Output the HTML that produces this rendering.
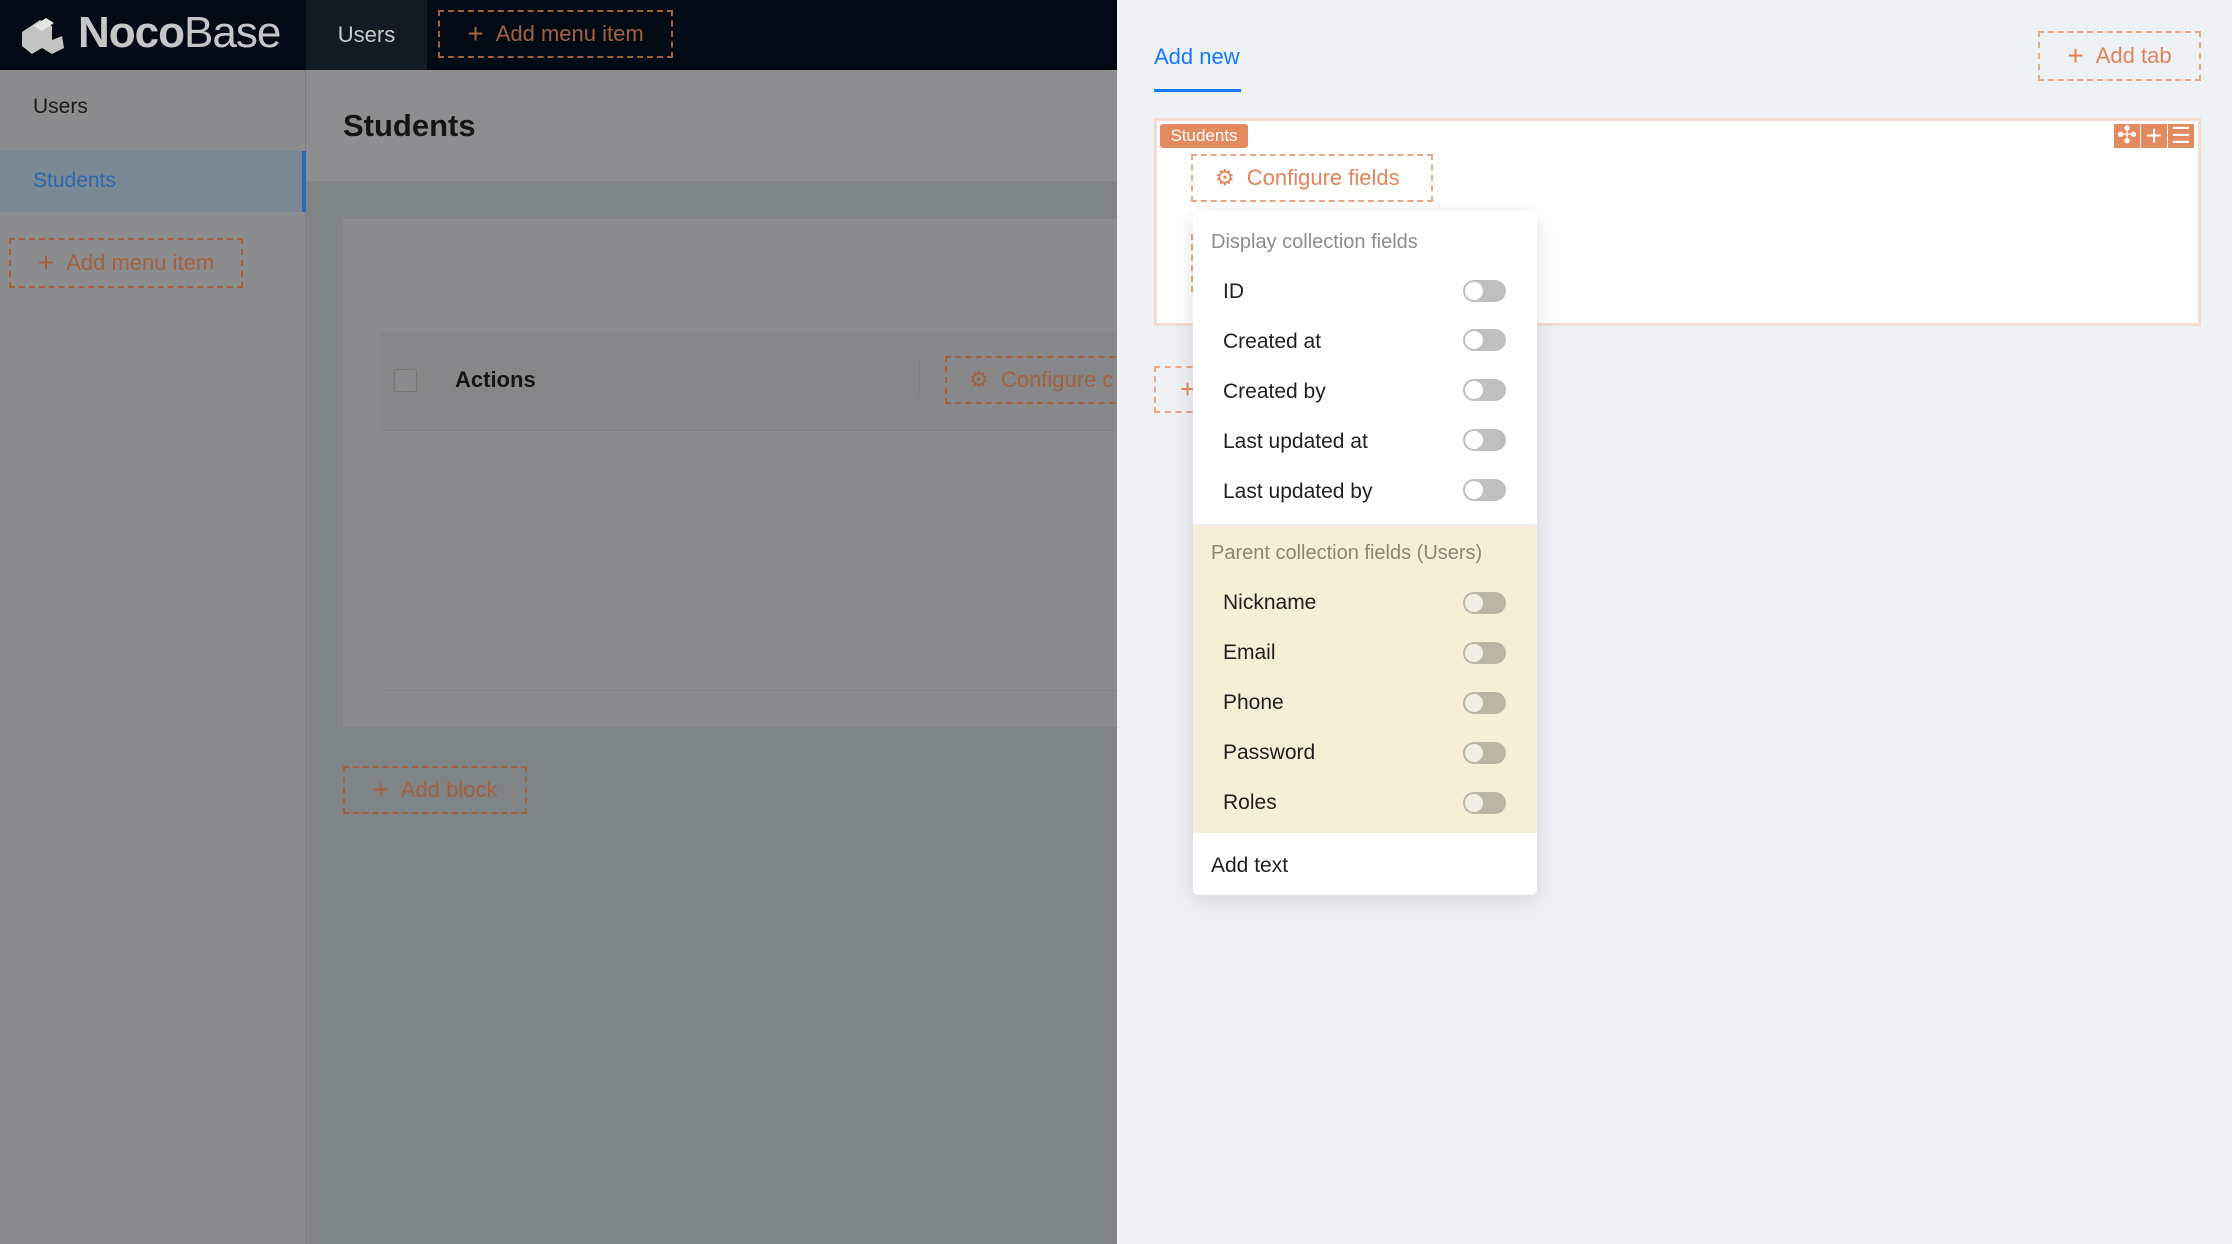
<!DOCTYPE html>
<html><head><meta charset="utf-8"><style>
*{box-sizing:border-box;margin:0;padding:0}
body{width:2232px;height:1244px;overflow:hidden;font-family:"Liberation Sans",sans-serif;background:#7f8486;position:relative}
.abs{position:absolute}
.dash{position:absolute;border:2px dashed #c0704a;color:#c0704a;display:flex;align-items:center;font-size:22px}
.dash2{position:absolute;border:2px dashed #e9a887;color:#e0845a;display:flex;align-items:center;font-size:22px}
.item{position:absolute;left:30px;font-size:21px;color:#1f1f1f}
.tg{position:absolute;left:270px;width:43px;height:22px;border-radius:11px;background:#bfbfbf}
.tg::after{content:"";position:absolute;left:2px;top:2px;width:18px;height:18px;border-radius:50%;background:#fff}
.y .tg{background:#b9b6a6}
.y .tg::after{background:#f1eee3}
</style></head><body>
<div class="abs" style="left:0;top:0;width:1117px;height:70px;background:#020b15"></div>
<div class="abs" style="left:306px;top:0;width:121px;height:70px;background:#121a24"></div>
<svg class="abs" style="left:18px;top:14px" width="50" height="42" viewBox="0 0 50 42"><path d="M4 18 L22 6 L34 12 L34 26 L44 22 L46 34 L34 40 L24 34 L14 40 L4 32 Z" fill="#c4c4c4"/><path d="M16 12 L28 4 L36 9 L24 17 Z" fill="#e6e6e6"/></svg>
<div class="abs" style="left:78px;top:8px;font-size:44px;color:#c6c6c6;letter-spacing:-1px"><b>Noco</b><span style="font-weight:300">Base</span></div>
<div class="abs" style="left:306px;width:121px;top:22px;text-align:center;font-size:22px;color:#c9c9c9">Users</div>
<div class="dash" style="left:438px;top:10px;width:235px;height:48px;justify-content:center;border-color:#a4613f;color:#a4613f"><span style="font-size:28px;margin-right:12px;font-weight:300">+</span>Add menu item</div>
<div class="abs" style="left:0;top:70px;width:306px;height:1174px;background:#8a8c8e;border-right:1px solid #7d8082"></div>
<div class="abs" style="left:33px;top:95px;font-size:21px;color:#1a1a1a">Users</div>
<div class="abs" style="left:0;top:151px;width:306px;height:61px;background:#7b8994"></div>
<div class="abs" style="left:302px;top:151px;width:4px;height:61px;background:#2a68b8"></div>
<div class="abs" style="left:33px;top:169px;font-size:21px;color:#2e67b0">Students</div>
<div class="dash" style="left:9px;top:238px;width:234px;height:50px;justify-content:center;border-color:#a4613f;color:#a4613f"><span style="font-size:28px;margin-right:12px;font-weight:300">+</span>Add menu item</div>
<div class="abs" style="left:306px;top:70px;width:811px;height:111px;background:#8d8e90"></div>
<div class="abs" style="left:343px;top:108px;font-size:31px;font-weight:bold;color:#151515">Students</div>
<div class="abs" style="left:343px;top:219px;width:774px;height:508px;background:#8b8c8e"></div>
<div class="abs" style="left:381px;top:332px;width:736px;height:99px;background:#868789;border-bottom:1px solid #808183"></div>
<div class="abs" style="left:394px;top:369px;width:23px;height:23px;border:1px solid #777;border-radius:3px;background:#8a8b8d"></div>
<div class="abs" style="left:455px;top:367px;font-size:22px;font-weight:bold;color:#151515">Actions</div>
<div class="abs" style="left:919px;top:360px;width:1px;height:36px;background:#7e7f81"></div>
<div class="dash" style="left:945px;top:356px;width:180px;height:48px;border-color:#a4613f;color:#a4613f;padding-left:22px;overflow:hidden;white-space:nowrap">⚙&nbsp;&nbsp;Configure c</div>
<div class="abs" style="left:381px;top:690px;width:736px;height:1px;background:#808183"></div>
<div class="dash" style="left:343px;top:766px;width:184px;height:48px;justify-content:center;border-color:#a4613f;color:#a4613f"><span style="font-size:28px;margin-right:12px;font-weight:300">+</span>Add block</div>
<div class="abs" style="left:1117px;top:0;width:1115px;height:1244px;background:#eff2f5"></div>
<div class="abs" style="left:1154px;top:44px;font-size:22px;color:#1677ff">Add new</div>
<div class="abs" style="left:1154px;top:89px;width:87px;height:3px;background:#1677ff"></div>
<div class="dash2" style="left:2038px;top:31px;width:163px;height:50px;justify-content:center"><span style="font-size:28px;margin-right:12px;font-weight:300">+</span>Add tab</div>
<div class="abs" style="left:1154px;top:118px;width:1047px;height:208px;background:#fff;border:3px solid #f3ddd2"></div>
<div class="abs" style="left:1160px;top:124px;width:88px;height:24px;background:#e38a5f;border-radius:3px;color:#fff;font-size:17px;text-align:center;line-height:24px">Students</div>
<div class="abs" style="left:2114px;top:124px;width:26px;height:24px;background:#e38a5f;color:#fff;font-size:24px;text-align:center;line-height:24px">✣</div>
<div class="abs" style="left:2141px;top:124px;width:26px;height:24px;background:#e38a5f;color:#fff;font-size:28px;text-align:center;line-height:24px">+</div>
<div class="abs" style="left:2168px;top:124px;width:26px;height:24px;background:#e38a5f;color:#fff;font-size:22px;text-align:center;line-height:24px">☰</div>
<div class="dash2" style="left:1191px;top:154px;width:242px;height:48px;padding-left:22px"><span style="margin-right:12px">⚙</span>Configure fields</div>
<div class="abs" style="left:1191px;top:234px;width:0;height:58px;border-left:2px dashed #e9a887"></div>
<div class="dash2" style="left:1154px;top:366px;width:60px;height:47px;padding-left:24px;border-right:none"><span style="font-size:26px">+</span></div>
<div class="abs" style="left:1193px;top:211px;width:344px;height:684px;background:#fff;border-radius:6px;box-shadow:0 6px 24px rgba(0,0,0,.12);overflow:hidden">
 <div class="abs" style="left:18px;top:20px;font-size:20px;color:#8c8c8c">Display collection fields</div>
 <div class="item" style="top:69px">ID</div><div class="tg" style="top:69px"></div>
 <div class="item" style="top:119px">Created at</div><div class="tg" style="top:118px"></div>
 <div class="item" style="top:169px">Created by</div><div class="tg" style="top:168px"></div>
 <div class="item" style="top:219px">Last updated at</div><div class="tg" style="top:218px"></div>
 <div class="item" style="top:269px">Last updated by</div><div class="tg" style="top:268px"></div>
 <div class="abs y" style="left:0;top:313px;width:344px;height:309px;background:#f6efd8;border-top:2px solid #eef0f4">
  <div class="abs" style="left:18px;top:16px;font-size:20px;color:#8a8577">Parent collection fields (Users)</div>
  <div class="item" style="top:65px">Nickname</div><div class="tg" style="top:66px"></div>
  <div class="item" style="top:115px">Email</div><div class="tg" style="top:116px"></div>
  <div class="item" style="top:165px">Phone</div><div class="tg" style="top:166px"></div>
  <div class="item" style="top:215px">Password</div><div class="tg" style="top:216px"></div>
  <div class="item" style="top:265px">Roles</div><div class="tg" style="top:266px"></div>
 </div>
 <div class="abs" style="left:18px;top:643px;font-size:21px;color:#1f1f1f">Add text</div>
</div>
</body></html>
